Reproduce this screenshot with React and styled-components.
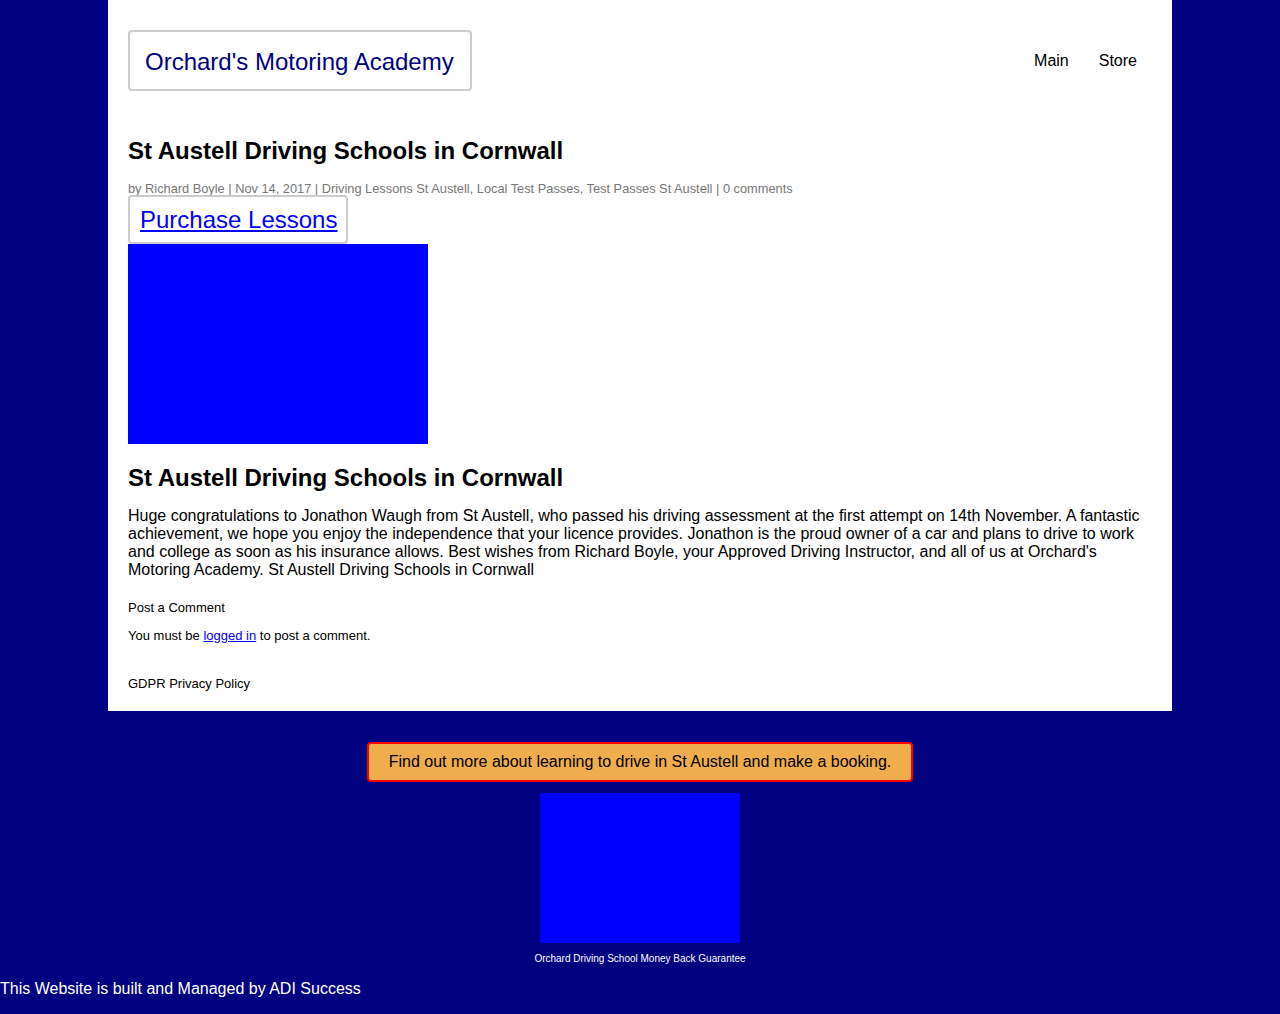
import React from "react";
import styled, { createGlobalStyle } from "styled-components";

const GlobalStyle = createGlobalStyle`
  html, body {
    margin: 0;
    padding: 0;
    background: #000080;
    font-family: "Liberation Sans", Arial, sans-serif;
  }
`;

const Page = styled.div`
  display: flex;
  flex-direction: column;
  align-items: center;
  min-height: 1014px;
`;

const Container = styled.main`
  width: 1064px;
  box-sizing: border-box;
  background: #ffffff;
  padding: 30px 20px 20px;
`;

const Header = styled.header`
  display: flex;
  justify-content: space-between;
  align-items: center;
`;

const Logo = styled.a`
  display: inline-block;
  border: 2px solid #cccccc;
  border-radius: 4px;
  padding: 15px 16px 13px 15px;
  font-size: 24px;
  line-height: 29px;
  color: #000080;
  text-decoration: none;
`;

const Nav = styled.nav`
  display: flex;
  gap: 30px;
  padding-right: 15px;
`;

const NavLink = styled.a`
  font-size: 16px;
  color: #000000;
  text-decoration: none;
`;

const Title = styled.h1`
  margin: ${(p) => (p.second ? "20px 0 0" : "46px 0 0")};
  font-size: 24px;
  line-height: 28px;
  font-weight: bold;
  color: #000000;
`;

const Meta = styled.p`
  margin: 17px 0 0;
  font-size: 12.8px;
  line-height: 13px;
  color: #777777;
`;

const Purchase = styled.a`
  display: inline-block;
  border: 2px solid #cccccc;
  border-radius: 4px;
  padding: 8px 9px 8px 10px;
  font-size: 24px;
  line-height: 29px;
  color: #0000ff;
  text-decoration: underline;
`;

const ImageBox = styled.div`
  width: ${(p) => p.w}px;
  height: ${(p) => p.h}px;
  background: #0000ff;
`;

const Body = styled.p`
  margin: 15px 0 0;
  font-size: 16px;
  line-height: 18px;
  color: #000000;
`;

const Small = styled.p`
  margin: ${(p) => p.mt}px 0 0;
  font-size: 13px;
  line-height: 15px;
  color: #000000;

  a {
    color: #0000ff;
  }
`;

const Cta = styled.a`
  display: inline-block;
  margin-top: 31px;
  background: #f0ad4e;
  border: 2px solid #ff0000;
  border-radius: 4px;
  padding: 9px 20px;
  font-size: 16px;
  line-height: 18px;
  color: #000000;
  text-decoration: none;
`;

const Badge = styled.figure`
  margin: 11px 0 0;
  display: flex;
  flex-direction: column;
  align-items: center;
`;

const Caption = styled.figcaption`
  margin-top: 10px;
  font-size: 10px;
  line-height: 12px;
  color: #ffffff;
`;

const Credit = styled.footer`
  align-self: stretch;
  margin-top: 15px;
  font-size: 16px;
  line-height: 18px;
  color: #ffffff;
`;

export default function App() {
  return (
    <>
      <GlobalStyle />
      <Page>
        <Container>
          <Header>
            <Logo href="#">Orchard's Motoring Academy</Logo>
            <Nav>
              <NavLink href="#">Main</NavLink>
              <NavLink href="#">Store</NavLink>
            </Nav>
          </Header>
          <Title>St Austell Driving Schools in Cornwall</Title>
          <Meta>
            by Richard Boyle | Nov 14, 2017 | Driving Lessons St Austell, Local
            Test Passes, Test Passes St Austell | 0 comments
          </Meta>
          <Purchase href="#">Purchase Lessons</Purchase>
          <ImageBox w={300} h={200} />
          <Title second>St Austell Driving Schools in Cornwall</Title>
          <Body>
            Huge congratulations to Jonathon Waugh from St Austell, who passed
            his driving assessment at the first attempt on 14th November. A
            fantastic achievement, we hope you enjoy the independence that your
            licence provides. Jonathon is the proud owner of a car and plans to
            drive to work and college as soon as his insurance allows. Best
            wishes from Richard Boyle, your Approved Driving Instructor, and all
            of us at Orchard's Motoring Academy. St Austell Driving Schools in
            Cornwall
          </Body>
          <Small mt={21}>Post a Comment</Small>
          <Small mt={13}>
            You must be <a href="#">logged in</a> to post a comment.
          </Small>
          <Small mt={33}>GDPR Privacy Policy</Small>
        </Container>
        <Cta href="#">
          Find out more about learning to drive in St Austell and make a booking.
        </Cta>
        <Badge>
          <ImageBox w={200} h={150} />
          <Caption>Orchard Driving School Money Back Guarantee</Caption>
        </Badge>
        <Credit>This Website is built and Managed by ADI Success</Credit>
      </Page>
    </>
  );
}
